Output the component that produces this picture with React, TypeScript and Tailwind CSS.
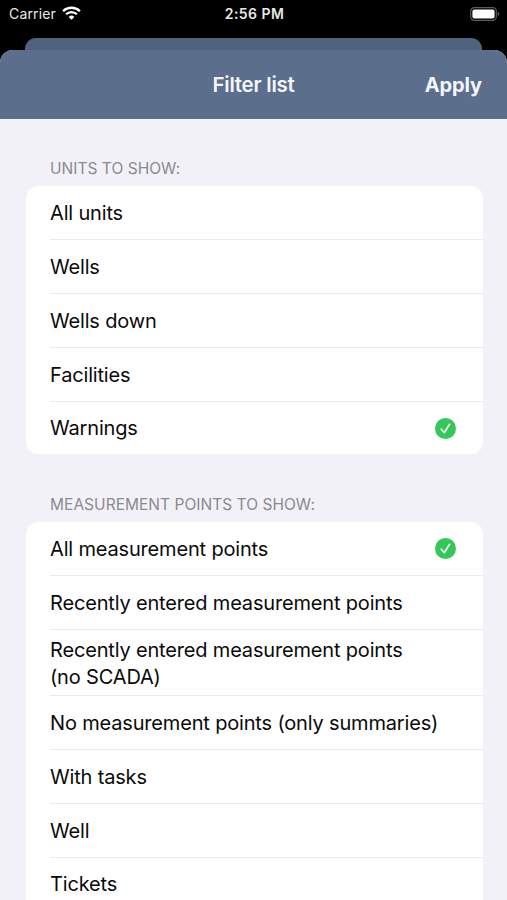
import React, { useState } from "react";
import clsx from "clsx";

interface FilterOption {
  label: string;
  tall?: boolean;
}

interface FilterSectionProps {
  title: string;
  options: FilterOption[];
  selected: string;
  onSelect: (label: string) => void;
}

const UNITS: FilterOption[] = [
  { label: "All units" },
  { label: "Wells" },
  { label: "Wells down" },
  { label: "Facilities" },
  { label: "Warnings" },
];

const MEASUREMENT_POINTS: FilterOption[] = [
  { label: "All measurement points" },
  { label: "Recently entered measurement points" },
  { label: "Recently entered measurement points (no SCADA)", tall: true },
  { label: "No measurement points (only summaries)" },
  { label: "With tasks" },
  { label: "Well" },
  { label: "Tickets" },
];

const App = () => {
  const [unit, setUnit] = useState("Warnings");
  const [point, setPoint] = useState("All measurement points");

  return (
    <div className="flex h-[900px] w-[507px] flex-col overflow-hidden bg-black font-['Inter',sans-serif]">
      <StatusBar />

      {/* Edge of the screen behind the sheet */}
      <div className="mx-[25px] h-[12.5px] shrink-0 rounded-t-[11px] bg-[#4f637e]" />

      {/* --- SHEET --- */}
      <div className="flex min-h-0 flex-1 flex-col overflow-hidden rounded-t-[13px] bg-[#f2f1f7]">
        <header className="grid h-[68.5px] shrink-0 grid-cols-3 items-center bg-[#5b6e8c] px-[25px] text-[#f4f6fc]">
          <span />
          <h1 className="pt-[2px] text-center text-[20.5px] leading-none font-semibold tracking-[-0.25px]">Filter list</h1>
          <button className="pt-[2px] text-right text-[20px] leading-none font-bold tracking-[-0.1px]">Apply</button>
        </header>

        <main className="flex flex-col pr-[24.5px] pl-[25.5px]">
          <FilterSection title="Units to show:" options={UNITS} selected={unit} onSelect={setUnit} />
          <FilterSection title="Measurement points to show:" options={MEASUREMENT_POINTS} selected={point} onSelect={setPoint} />
        </main>
      </div>
    </div>
  );
};

function StatusBar() {
  return (
    <div className="grid h-[37.5px] shrink-0 grid-cols-3 items-start pt-[4px] pr-[7px] pl-[9px] text-[#e8e8e8]">
      <div className="flex h-[18px] items-center gap-[6px]">
        <span className="text-[14px] tracking-[0.15px]">Carrier</span>
        <WifiIcon />
      </div>
      <span className="pt-px text-center text-[14px] leading-[18px] font-semibold tracking-[0.45px]">2:56 PM</span>
      <div className="flex h-[19px] items-center justify-end">
        <BatteryIcon />
      </div>
    </div>
  );
}

function FilterSection({ title, options, selected, onSelect }: FilterSectionProps) {
  return (
    <section className="pt-[41.2px]">
      <h2 className="h-[26px] pl-[24.5px] text-[15.5px] leading-[18px] tracking-[0.03px] text-[#8b8a90] uppercase">{title}</h2>
      <ul className="overflow-hidden rounded-[12px] bg-white pl-[24.5px]">
        {options.map((option, i) => (
          <li
            key={option.label}
            onClick={() => onSelect(option.label)}
            className={clsx(
              "flex items-center justify-between pr-[26.5px]",
              option.tall ? "h-[66.3px]" : "h-[53.75px]",
              i > 0 && "border-t border-[#ebebed]"
            )}
          >
            <span className={clsx("pt-[1.5px] text-[20px] leading-[27px] tracking-[-0.17px] text-[#0a0a0a]", option.tall && "w-[370px]")}>
              {option.label}
            </span>
            {option.label === selected && <CheckIcon />}
          </li>
        ))}
      </ul>
    </section>
  );
}

function CheckIcon() {
  return (
    <svg width="21" height="21" viewBox="0 0 21 21" className="shrink-0">
      <circle cx="10.5" cy="10.5" r="10.5" fill="#34c759" />
      <path d="M6.2 11.2 9.3 14.7 14.6 6.3" fill="none" stroke="#fff" strokeWidth="1.6" strokeLinecap="round" strokeLinejoin="round" />
    </svg>
  );
}

function WifiIcon() {
  return (
    <svg width="19" height="14" viewBox="0 0 19 14">
      <g fill="none" stroke="#fff" strokeWidth="2.3">
        <path d="M1.1 5.2a12 12 0 0 1 16.8 0" />
        <path d="M4.1 8.3a7.7 7.7 0 0 1 10.8 0" />
      </g>
      <path d="M6.6 10.9a4.2 4.2 0 0 1 5.8 0L9.5 13.8Z" fill="#fff" />
    </svg>
  );
}

function BatteryIcon() {
  return (
    <svg width="30" height="14" viewBox="0 0 30 14">
      <rect x="0.7" y="0.7" width="25.6" height="12.6" rx="3.6" fill="none" stroke="#5c5c5c" strokeWidth="1.2" />
      <rect x="2.4" y="2.4" width="22.2" height="9.2" rx="2" fill="#fff" />
      <path d="M27.7 4.8c1 .4 1.6 1.2 1.6 2.2s-.6 1.8-1.6 2.2Z" fill="#5c5c5c" />
    </svg>
  );
}

export default App;
